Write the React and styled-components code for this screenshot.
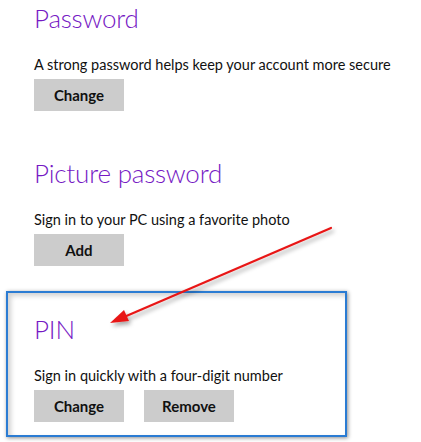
import React from "react";
import styled, { createGlobalStyle } from "styled-components";

const GlobalStyle = createGlobalStyle`
  html, body {
    margin: 0;
    padding: 0;
    background: #fff;
  }
  body {
    font-family: Lato, "Open Sans", sans-serif;
    color: #111;
  }
`;

const Page = styled.div`
  position: relative;
  width: 421px;
  height: 442px;
  overflow: hidden;
  padding: 0 0 0 34px;
  box-sizing: border-box;
`;

const Section = styled.section`
  margin-top: ${({ $gap }) => $gap || 0}px;
`;

const PinBox = styled.section`
  margin: 25px 0 0 -28px;
  width: 341px;
  box-sizing: border-box;
  border: 2px solid #2b7cd3;
  padding: 18px 0 13px 26px;
  box-shadow: 1px 1px 4px rgba(0, 0, 0, 0.45),
    inset 3px 3px 5px rgba(0, 0, 0, 0.18);
`;

const Heading = styled.h2`
  margin: 0;
  font-size: 26px;
  font-weight: 300;
  line-height: 37px;
  letter-spacing: -0.2px;
  color: #7619c4;
  white-space: nowrap;
`;

const Desc = styled.p`
  margin: 18px 0 0;
  font-size: 14.5px;
  line-height: 20px;
  color: #111;
  white-space: nowrap;
`;

const Buttons = styled.div`
  display: flex;
  gap: 20px;
  margin-top: 4px;
`;

const Button = styled.button`
  width: 90px;
  height: 32px;
  border: none;
  background: #cccccc;
  font-family: Lato, "Open Sans", sans-serif;
  font-size: 15px;
  font-weight: 700;
  color: #111;
  padding: 0;
  cursor: pointer;
`;

const Arrow = styled.svg`
  position: absolute;
  left: 0;
  top: 0;
  pointer-events: none;
`;

const ArrowOverlay = () => (
  <Arrow width="421" height="442" viewBox="0 0 421 442">
    <defs>
      <filter id="sh" x="-20%" y="-20%" width="140%" height="140%">
        <feDropShadow dx="2" dy="3" stdDeviation="2" floodColor="#000" floodOpacity="0.35" />
      </filter>
    </defs>
    <g filter="url(#sh)">
      <line x1="331" y1="228" x2="124" y2="317" stroke="#e81818" strokeWidth="2.2" strokeLinecap="round" />
      <polygon points="110,323 129,321 124,310" fill="#e81818" />
    </g>
  </Arrow>
);

export default function App() {
  return (
    <>
      <GlobalStyle />
      <Page>
        <Section>
          <Heading>Password</Heading>
          <Desc>A strong password helps keep your account more secure</Desc>
          <Buttons>
            <Button>Change</Button>
          </Buttons>
        </Section>
        <Section $gap={44}>
          <Heading>Picture password</Heading>
          <Desc>Sign in to your PC using a favorite photo</Desc>
          <Buttons>
            <Button>Add</Button>
          </Buttons>
        </Section>
        <PinBox>
          <Heading>PIN</Heading>
          <Desc>Sign in quickly with a four-digit number</Desc>
          <Buttons>
            <Button>Change</Button>
            <Button>Remove</Button>
          </Buttons>
        </PinBox>
        <ArrowOverlay />
      </Page>
    </>
  );
}
